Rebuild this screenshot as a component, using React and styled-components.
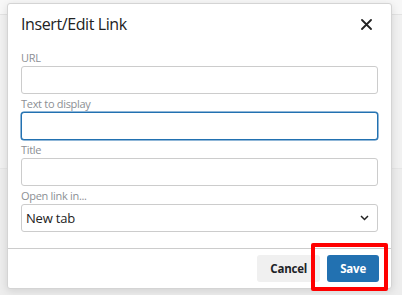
import React from 'react'
import styled, { createGlobalStyle } from 'styled-components'

const GlobalStyle = createGlobalStyle`
  html, body {
    margin: 0;
    padding: 0;
    background: #efefef;
    font-family: "Open Sans", "Noto Sans", Arial, sans-serif;
  }
`

const Page = styled.div`
  position: relative;
  width: 402px;
  height: 295px;
  overflow: hidden;
  background: #ededed;
`

const TopStrip = styled.div`
  height: 14px;
  background: #f7f7f7;
  border-bottom: 1px solid #e3e3e3;
`

const Panel = styled.div`
  height: 153px;
  background: #f1f1f1;
  border-bottom: 1px solid #e6e6e6;
`

const Dialog = styled.div`
  position: absolute;
  left: 7px;
  top: 3px;
  width: 385px;
  height: 286px;
  background: #fff;
  border: 1px solid #d4d4d4;
  border-radius: 3px;
  box-shadow: 0 2px 8px rgba(0, 0, 0, 0.12);
  display: flex;
  flex-direction: column;
  box-sizing: border-box;
`

const Header = styled.div`
  display: flex;
  align-items: center;
  justify-content: space-between;
  padding: 9px 19px 0 13px;
  height: 32px;
  box-sizing: border-box;
`

const Title = styled.h1`
  margin: 0;
  font-size: 16px;
  font-weight: 400;
  letter-spacing: -0.4px;
  color: #222;
`

const CloseButton = styled.button`
  border: 0;
  background: none;
  padding: 0;
  width: 12px;
  height: 12px;
  display: flex;
  align-items: center;
  justify-content: center;
  cursor: pointer;
`

const Body = styled.div`
  padding: 14px 13px 16px 13px;
  display: flex;
  flex-direction: column;
`

const Field = styled.label`
  display: flex;
  flex-direction: column;
`

const Label = styled.span`
  font-size: 11px;
  line-height: 17px;
  letter-spacing: -0.3px;
  color: #8c8f94;
  margin-top: ${p => (p.first ? '0' : '1px')};
`

const TextInput = styled.div`
  height: 28px;
  box-sizing: border-box;
  border: 1px solid ${p => (p.focused ? '#2271b1' : '#ccc')};
  box-shadow: ${p => (p.focused ? '0 0 0 0.5px #2271b1' : 'none')};
  border-radius: 3px;
  background: #fff;
`

const Select = styled.div`
  height: 28px;
  box-sizing: border-box;
  border: 1px solid #ccc;
  border-radius: 3px;
  display: flex;
  align-items: center;
  justify-content: space-between;
  padding: 0 8px 0 4px;
  font-size: 13px;
  letter-spacing: -0.2px;
  color: #222;
`

const Footer = styled.div`
  position: relative;
  border-top: 1px solid #ccc;
  margin-top: auto;
  height: 41px;
  display: flex;
  justify-content: flex-end;
  align-items: flex-start;
  gap: 7px;
  padding: 6px 12px 0 0;
  box-sizing: border-box;
`

const Button = styled.button`
  height: 27px;
  border: 0;
  border-radius: 3px;
  padding: 0 13px;
  font-family: inherit;
  font-size: 11.5px;
  font-weight: 700;
  letter-spacing: -0.2px;
  background: ${p => (p.primary ? '#2271b1' : '#f0f0f0')};
  color: ${p => (p.primary ? '#fff' : '#1d2327')};
`

const Highlight = styled.div`
  position: absolute;
  left: 303px;
  top: -6px;
  width: 77px;
  height: 48px;
  box-sizing: border-box;
  border: 4px solid #ff0000;
  border-radius: 2px;
  pointer-events: none;
`

const fields = [
  { label: 'URL' },
  { label: 'Text to display', focused: true },
  { label: 'Title' },
]

export default function App() {
  return (
    <>
      <GlobalStyle />
      <Page>
        <TopStrip />
        <Panel />
        <Dialog>
          <Header>
            <Title>Insert/Edit Link</Title>
            <CloseButton aria-label="Close">
              <svg width="11" height="11" viewBox="0 0 11 11">
                <path d="M1 1 L10 10 M10 1 L1 10" stroke="#222" strokeWidth="1.8" strokeLinecap="round" />
              </svg>
            </CloseButton>
          </Header>
          <Body>
            {fields.map((f, i) => (
              <Field key={f.label}>
                <Label first={i === 0}>{f.label}</Label>
                <TextInput focused={f.focused} />
              </Field>
            ))}
            <Field>
              <Label>Open link in...</Label>
              <Select>
                <span>New tab</span>
                <svg width="9" height="6" viewBox="0 0 9 6">
                  <path d="M1 1 L4.5 4.5 L8 1" fill="none" stroke="#222" strokeWidth="1.5" />
                </svg>
              </Select>
            </Field>
          </Body>
          <Footer>
            <Button>Cancel</Button>
            <Button primary>Save</Button>
            <Highlight />
          </Footer>
        </Dialog>
      </Page>
    </>
  )
}
